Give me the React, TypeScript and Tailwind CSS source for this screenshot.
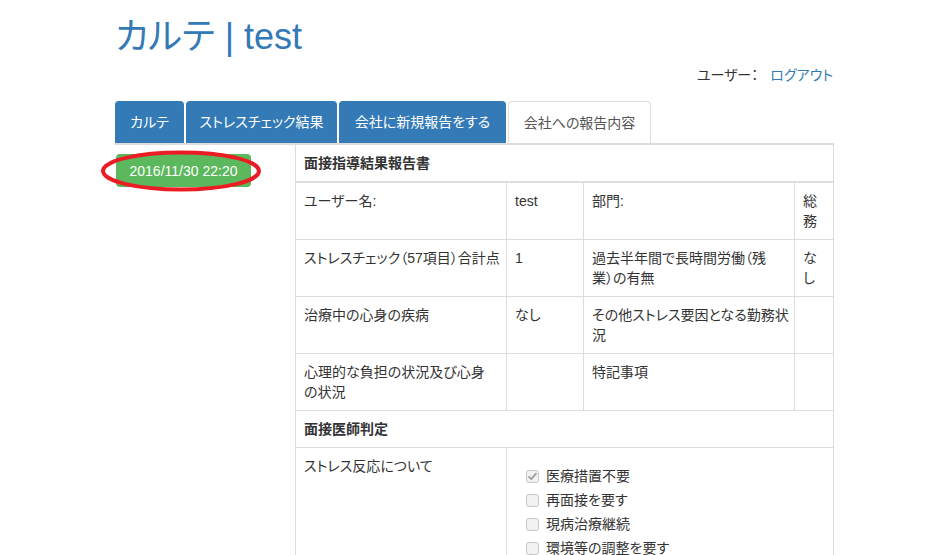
import React from "react";

function Check({ checked }: { checked?: boolean }) {
  return (
    <svg width="13" height="13" viewBox="0 0 13 13" className="shrink-0">
      <rect x="0.5" y="0.5" width="12" height="12" rx="2.5" fill="#f2f2f2" stroke="#c8c8c8" />
      {checked && (
        <path d="M3 6.8 L5.3 9.2 L10 3.6" fill="none" stroke="#a0a0a0" strokeWidth="1.8" strokeLinecap="round" strokeLinejoin="round" />
      )}
    </svg>
  );
}

export default function App() {
  const tabs = [
    { label: "カルテ", w: "w-[69px]", active: false },
    { label: "ストレスチェック結果", w: "w-[151px]", active: false },
    { label: "会社に新規報告をする", w: "w-[167px]", active: false },
    { label: "会社への報告内容", w: "w-[143px]", active: true },
  ];
  const checks = [
    { label: "医療措置不要", checked: true },
    { label: "再面接を要す", checked: false },
    { label: "現病治療継続", checked: false },
    { label: "環境等の調整を要す", checked: false },
    { label: "就業上の措置を要す", checked: false },
  ];
  const td = "border border-[#ddd] p-[8px] align-top font-normal text-left";
  return (
    <div className="min-h-[555px] overflow-hidden bg-white font-['Liberation_Sans','Noto_Sans_CJK_JP',sans-serif] [font-feature-settings:'palt'] text-[14px] leading-[20px] text-[#333]">
      <div className="ml-[115px] w-[720px] pt-[17px]">
        <h1 className="text-[36px] leading-[40px] font-normal text-[#337ab7]">カルテ | test</h1>
        <div className="mt-[8px] flex justify-end gap-[12px] pr-[2px]">
          <span>ユーザー：</span>
          <a className="text-[#337ab7]">ログアウト</a>
        </div>
        <div className="mt-[16px] flex w-[719px] gap-[2px] border-b-2 border-[#ddd]">
          {tabs.map((t) =>
            t.active ? (
              <div
                key={t.label}
                className={`${t.w} flex h-[42px] items-center justify-center rounded-t-[4px] border border-b-0 border-[#ddd] bg-white text-[#555]`}
              >
                {t.label}
              </div>
            ) : (
              <div
                key={t.label}
                className={`${t.w} flex h-[42px] items-center justify-center rounded-t-[4px] bg-[#337ab7] text-white`}
              >
                {t.label}
              </div>
            )
          )}
        </div>
        <div className="flex">
          <div className="relative w-[180px] shrink-0">
            <div className="ml-[1px] mt-[9px] flex h-[33px] w-[135px] items-center justify-center rounded-[4px] bg-[#5cb85c] text-white">
              2016/11/30 22:20
            </div>
            <svg
              className="pointer-events-none absolute left-[-15px] top-[4px]"
              width="164"
              height="44"
              viewBox="0 0 164 44"
            >
              <ellipse cx="81" cy="22" rx="78" ry="18.5" fill="none" stroke="#ec1c24" strokeWidth="4" />
            </svg>
          </div>
          <table className="w-[538px] table-fixed border-collapse">
            <colgroup>
              <col className="w-[211px]" />
              <col className="w-[77px]" />
              <col className="w-[211px]" />
              <col className="w-[39px]" />
            </colgroup>
            <tbody>
              <tr>
                <th colSpan={4} className="border border-t-0 border-b-2 border-[#ddd] p-[8px] text-left font-bold">
                  面接指導結果報告書
                </th>
              </tr>
              <tr>
                <td className={td}>ユーザー名:</td>
                <td className={td}>test</td>
                <td className={td}>部門:</td>
                <td className={td}>
                  総<br />務
                </td>
              </tr>
              <tr>
                <td className={`${td} whitespace-nowrap`}>ストレスチェック（57項目）合計点</td>
                <td className={td}>1</td>
                <td className={`${td} whitespace-nowrap`}>
                  過去半年間で長時間労働（残
                  <br />
                  業）の有無
                </td>
                <td className={td}>
                  な<br />し
                </td>
              </tr>
              <tr>
                <td className={td}>治療中の心身の疾病</td>
                <td className={td}>なし</td>
                <td className={`${td} whitespace-nowrap`}>
                  その他ストレス要因となる勤務状
                  <br />
                  況
                </td>
                <td className={td}></td>
              </tr>
              <tr>
                <td className={`${td} whitespace-nowrap`}>
                  心理的な負担の状況及び心身
                  <br />
                  の状況
                </td>
                <td className={td}></td>
                <td className={td}>特記事項</td>
                <td className={td}></td>
              </tr>
              <tr>
                <th colSpan={4} className="border border-[#ddd] p-[8px] text-left font-bold">
                  面接医師判定
                </th>
              </tr>
              <tr>
                <td className={td}>ストレス反応について</td>
                <td colSpan={3} className={td}>
                  <div className="mt-[10px] flex flex-col gap-[4px] pl-[11px]">
                    {checks.map((c) => (
                      <label key={c.label} className="flex h-[20px] items-center gap-[7px]">
                        <Check checked={c.checked} />
                        <span>{c.label}</span>
                      </label>
                    ))}
                  </div>
                </td>
              </tr>
            </tbody>
          </table>
        </div>
      </div>
    </div>
  );
}
